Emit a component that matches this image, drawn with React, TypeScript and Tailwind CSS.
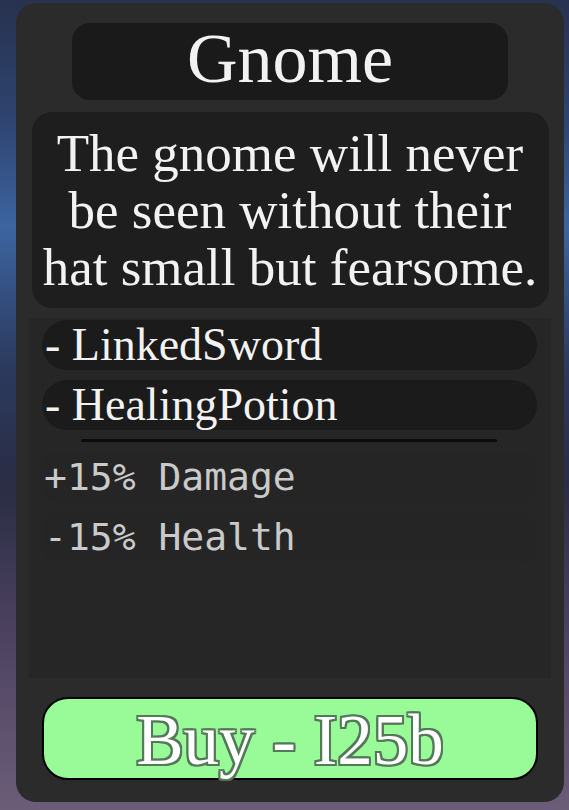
import React from "react";

const serif = "font-['Liberation_Serif','DejaVu_Serif',serif]";

export default function App() {
  return (
    <div className="w-[569px] h-[810px] overflow-hidden bg-[linear-gradient(180deg,#27324f_0%,#2f4470_15%,#3d64a0_28%,#2c3a5e_45%,#2a2d44_60%,#4c4260_78%,#6b5d78_100%)] pt-[3px] pl-[16px]">
      <div className="w-[548px] h-[799px] rounded-[20px] bg-[#2b2b2b] flex flex-col items-center">
        <div className="mt-[20px] w-[436px] h-[77px] rounded-[18px] bg-[#1a1a1a] flex items-center justify-center">
          <span className={`${serif} text-[70px] leading-[77px] text-[#f2f2f2] -mt-[7px]`}>Gnome</span>
        </div>

        <div className="mt-[12px] w-[517px] h-[196px] rounded-[20px] bg-[#1e1e1e] flex items-center justify-center">
          <p className={`${serif} text-[53px] leading-[57px] text-[#f2f2f2] text-center whitespace-nowrap`}>
            The gnome will never
            <br />
            be seen without their
            <br />
            hat small but fearsome.
          </p>
        </div>

        <div className="mt-[10px] w-[522px] h-[360px] bg-[#262626] flex flex-col pl-[13px]">
          <div className="mt-[2px] w-[495px] h-[50px] rounded-full bg-[#1b1b1b] flex items-center">
            <span className={`${serif} text-[46px] leading-[50px] text-[#f2f2f2] pl-[3px] whitespace-nowrap`}>- LinkedSword</span>
          </div>
          <div className="mt-[10px] w-[495px] h-[50px] rounded-full bg-[#1b1b1b] flex items-center">
            <span className={`${serif} text-[46px] leading-[50px] text-[#f2f2f2] pl-[3px] whitespace-nowrap`}>- HealingPotion</span>
          </div>
          <div className="mt-[9px] ml-[39px] w-[416px] h-[3px] bg-[#0b0b0b] rounded-full" />
          <div className="mt-[10px] w-[495px] h-[50px] rounded-[16px] bg-[#252525] flex items-center">
            <span className="font-['DejaVu_Sans_Mono','Liberation_Mono',monospace] text-[38px] leading-[50px] text-[#cacaca] pl-[2px] whitespace-nowrap">+15% Damage</span>
          </div>
          <div className="mt-[10px] w-[495px] h-[50px] rounded-[16px] bg-[#252525] flex items-center">
            <span className="font-['DejaVu_Sans_Mono','Liberation_Mono',monospace] text-[38px] leading-[50px] text-[#cacaca] pl-[2px] whitespace-nowrap">-15% Health</span>
          </div>
        </div>

        <div className="mt-[19px] w-[496px] h-[83px] rounded-[26px] bg-[#98fb98] border-2 border-black flex items-center justify-center overflow-visible">
          <span
            className={`${serif} text-[71px] leading-[83px] text-white mt-[4px] whitespace-nowrap [text-shadow:2px_0_0_#55785a,-2px_0_0_#55785a,0_2px_0_#55785a,0_-2px_0_#55785a,2px_2px_0_#55785a,-2px_-2px_0_#55785a,2px_-2px_0_#55785a,-2px_2px_0_#55785a]`}
          >
            Buy - I25b
          </span>
        </div>
      </div>
    </div>
  );
}
